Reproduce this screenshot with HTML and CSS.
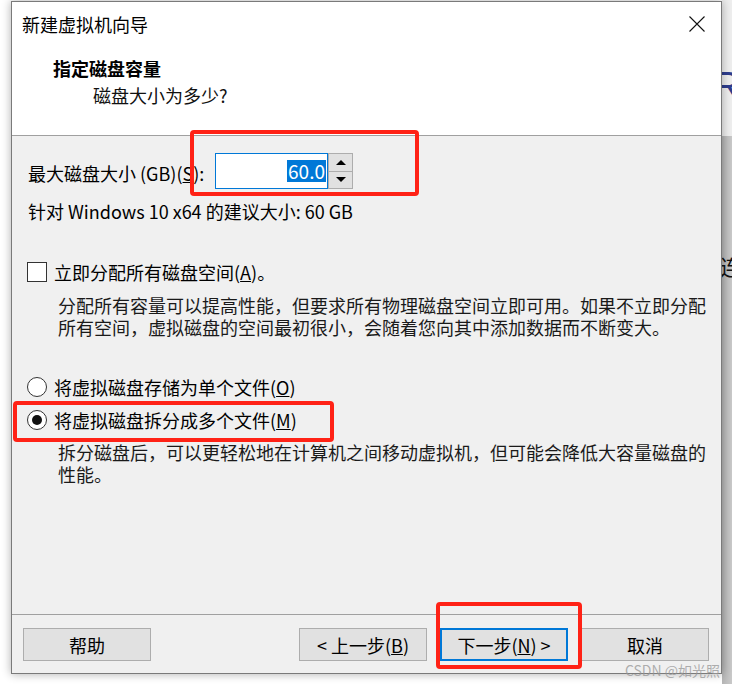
FILE: index.html
```html
<!DOCTYPE html>
<html lang="zh-CN">
<head>
<meta charset="utf-8">
<title>新建虚拟机向导</title>
<link rel="stylesheet" href="styles.css">
</head>
<body>
<div class="desk">
  <div class="dialog">
    <div class="header">
      <div class="titlebar">
        <span class="title">新建虚拟机向导</span>
        <svg class="close" width="16" height="16" viewBox="0 0 16 16"><path d="M0.5 0.5 L15.5 15.5 M15.5 0.5 L0.5 15.5" stroke="#111" stroke-width="1.1" fill="none"/></svg>
      </div>
      <div class="head-title">指定磁盘容量</div>
      <div class="head-sub">磁盘大小为多少?</div>
    </div>
    <div class="body">
      <div class="size-row">
        <span class="size-label">最大磁盘大小 (GB)(<u>S</u>):</span>
        <div class="spin">
          <div class="spin-input"><span class="sel">60.0</span></div>
          <div class="spin-btns">
            <div class="spin-btn"><span class="tri-up"></span></div>
            <div class="spin-btn"><span class="tri-down"></span></div>
          </div>
        </div>
      </div>
      <div class="hint">针对 Windows 10 x64 的建议大小: 60 GB</div>
      <div class="opt check-row">
        <span class="checkbox"></span>
        <span>立即分配所有磁盘空间(<u>A</u>)。</span>
      </div>
      <p class="desc">分配所有容量可以提高性能，但要求所有物理磁盘空间立即可用。如果不立即分配所有空间，虚拟磁盘的空间最初很小，会随着您向其中添加数据而不断变大。</p>
      <div class="opt radio-row first">
        <span class="radio"></span>
        <span>将虚拟磁盘存储为单个文件(<u>O</u>)</span>
      </div>
      <div class="opt radio-row second">
        <span class="radio on"></span>
        <span>将虚拟磁盘拆分成多个文件(<u>M</u>)</span>
      </div>
      <p class="desc desc2">拆分磁盘后，可以更轻松地在计算机之间移动虚拟机，但可能会降低大容量磁盘的性能。</p>
    </div>
    <div class="footer">
      <div class="btn">帮助</div>
      <div class="btn push">&lt; 上一步(<u>B</u>)</div>
      <div class="btn primary">下一步(<u>N</u>) &gt;</div>
      <div class="btn">取消</div>
    </div>
  </div>
  <div class="strip">
    <div class="strip-top"><span class="bg-r">R</span></div>
    <div class="strip-bottom"><span class="bg-lian">连</span></div>
  </div>
  <div class="mark mark1"></div>
  <div class="mark mark2"></div>
  <div class="mark mark3"></div>
  <div class="watermark">CSDN @如光照</div>
</div>
</body>
</html>
```
FILE: styles.css
```css
* { box-sizing: border-box; }
html, body { margin: 0; padding: 0; }
body {
  width: 732px;
  height: 684px;
  overflow: hidden;
  background: #ffffff;
  font-family: "Noto Sans CJK SC", "Noto Sans", sans-serif;
  color: #000;
}
.desk {
  position: relative;
  display: flex;
  width: 732px;
  height: 684px;
  padding: 1px 0 0 11px;
}
.dialog {
  position: relative;
  z-index: 1;
  width: 711px;
  height: 673px;
  border: 1px solid #7a7a7a;
  display: flex;
  flex-direction: column;
  box-shadow: 0 0 9px rgba(0, 0, 0, 0.32);
  background: #f0f0f0;
}
.header {
  background: #fff;
  height: 134px;
  border-bottom: 1px solid #a0a0a0;
}
.titlebar {
  height: 44px;
  display: flex;
  align-items: center;
  justify-content: space-between;
  padding: 0 16px 0 10px;
}
.title { font-size: 18px; line-height: 24px; }
.close { display: block; }
.head-title {
  margin-top: 10px;
  padding-left: 41px;
  font-size: 18px;
  line-height: 24px;
  font-weight: 700;
}
.head-sub {
  margin-top: 3px;
  padding-left: 81px;
  font-size: 18px;
  line-height: 24px;
  color: #111;
}
.body {
  flex: 1;
  font-size: 18px;
  line-height: 24px;
}
.size-row {
  display: flex;
  align-items: center;
  margin-top: 17px;
  padding-left: 16px;
}
.size-label { width: 187px; padding-top: 3px; }
.spin { display: flex; height: 36px; }
.spin-input {
  width: 113px;
  height: 36px;
  border: 1px solid #0078d7;
  background: #fff;
  display: flex;
  align-items: center;
  justify-content: flex-end;
  padding-right: 1px;
}
.sel {
  background: #0078d7;
  color: #fff;
  line-height: 22px;
  font-size: 19px;
  padding: 0 1px;
}
.spin-btns {
  width: 25px;
  display: flex;
  flex-direction: column;
}
.spin-btn {
  flex: 1;
  border: 1px solid #adadad;
  background: #e1e1e1;
  display: flex;
  align-items: center;
  justify-content: center;
}
.spin-btn + .spin-btn { border-top: 0; }
.tri-up, .tri-down {
  width: 0; height: 0;
  border-left: 5px solid transparent;
  border-right: 5px solid transparent;
}
.tri-up { border-bottom: 5px solid #000; }
.tri-down { border-top: 5px solid #000; }
.hint { margin-top: 10px; padding-left: 16px; }
.opt {
  display: flex;
  align-items: center;
  gap: 7px;
  padding-left: 15px;
  height: 24px;
}
.check-row { margin-top: 37px; }
.checkbox {
  width: 20px; height: 20px;
  border: 1px solid #333;
  background: #fff;
}
.desc {
  margin: 10px 0 0 0;
  padding-left: 46px;
  width: 700px;
  line-height: 22px;
  color: #1a1a1a;
}
.radio {
  width: 20px; height: 20px;
  border: 1px solid #333;
  border-radius: 50%;
  background: #fff;
  display: flex;
  align-items: center;
  justify-content: center;
}
.radio.on::after {
  content: "";
  width: 10px; height: 10px;
  border-radius: 50%;
  background: #111;
}
.radio-row.first { margin-top: 37px; }
.radio-row.second { margin-top: 9px; }
.desc2 { margin-top: 9px; }
.footer {
  height: 59px;
  border-top: 1px solid #a0a0a0;
  display: flex;
  align-items: flex-start;
  gap: 13px;
  padding: 13px 12px 0 11px;
}
.btn {
  width: 128px;
  height: 33px;
  border: 1px solid #adadad;
  background: #e1e1e1;
  display: flex;
  align-items: center;
  justify-content: center;
  font-size: 18px;
}
.btn.push { margin-left: auto; }
.btn.primary { border: 2px solid #0078d7; }
.strip {
  flex: 1;
  overflow: hidden;
  display: flex;
  flex-direction: column;
  white-space: nowrap;
  margin-top: -1px;
}
.strip-top {
  height: 136px;
  background: #eeeeee;
  padding-top: 64px;
}
.bg-r {
  display: block;
  margin-left: -9px;
  font-family: "Liberation Sans", sans-serif;
  font-size: 38px;
  line-height: 44px;
  color: #2e3d8e;
}
.strip-bottom {
  flex: 1;
  background: linear-gradient(90deg, #b5b5b5, #c9c9c9);
  padding-top: 117px;
}
.bg-lian {
  display: block;
  margin-left: -2px;
  font-size: 21px;
  line-height: 26px;
  color: #111;
}
.mark {
  position: absolute;
  z-index: 2;
  border: 4px solid #ff2216;
  border-radius: 4px;
}
.mark1 { left: 190px; top: 130px; width: 229px; height: 66px; }
.mark2 { left: 13px; top: 401px; width: 321px; height: 41px; }
.mark3 { left: 436px; top: 602px; width: 146px; height: 67px; }
.watermark {
  position: absolute;
  z-index: 3;
  right: 12px;
  top: 661px;
  font-size: 14px;
  line-height: 18px;
  color: rgba(150, 150, 150, 0.75);
}
```
